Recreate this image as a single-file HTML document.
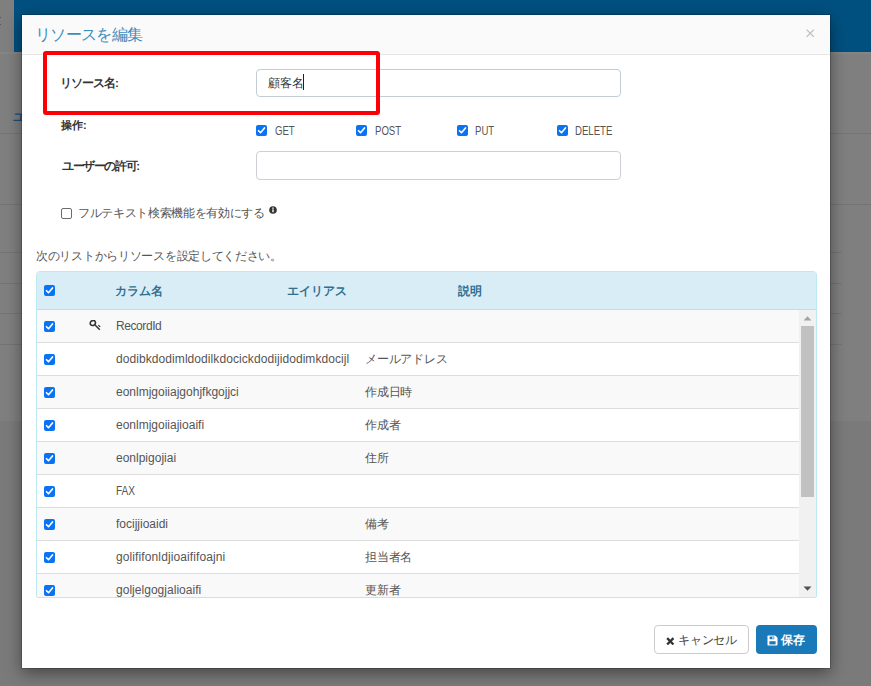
<!DOCTYPE html>
<html lang="ja">
<head>
<meta charset="utf-8">
<title>リソースを編集</title>
<style>
*{box-sizing:border-box;margin:0;padding:0}
html,body{width:871px;height:686px;overflow:hidden}
body{position:relative;background:#7f7f7f;font-family:"Liberation Sans",sans-serif;font-size:12px;color:#444}
.abs{position:absolute}
/* darkened page behind the modal */
.topbar{left:14px;top:0;width:857px;height:52px;background:#00507f}
.pgline{left:0;width:871px;height:1px;background:#747474}
.pgfoot{left:0;top:421px;width:871px;height:265px;background:#7a7a7a}
.pglink{left:12.5px;top:109.5px;font-size:12px;font-weight:bold;line-height:14px;color:#1c4f78;white-space:nowrap}
/* modal */
.modal{left:22px;top:15px;width:808px;height:653px;background:#fff;box-shadow:0 5px 15px rgba(0,0,0,.44),0 0 0 1px rgba(0,0,0,.18)}
.mhead{left:0;top:0;width:808px;height:40px;background:#fafafa;border-bottom:1px solid #e5e5e5}
.title{left:13px;top:10px;font-size:16px;line-height:20px;letter-spacing:-0.7px;color:#3c8dbc;white-space:nowrap}
.close{left:784px;top:14px;width:8.5px;height:8.5px}
.lbl{font-weight:bold;font-size:12px;line-height:14px;color:#333;white-space:nowrap}
.txt{font-size:12px;line-height:14px;color:#555;white-space:nowrap}
.inp{height:28px;border:1px solid #ccd0d4;border-radius:4px;background:#fff}
.cb{width:11px;height:11px;border-radius:2px;background:#0a73f4}
.cb svg{display:block;width:11px;height:11px}
.cbo{width:11px;height:11px;border-radius:2px;border:1px solid #6b6b6b;background:#fff}
.redbox{left:21px;top:36px;width:337px;height:64px;border:4px solid #fb0007;border-radius:3px}
/* table panel */
.panel{left:14px;top:256px;width:781px;height:327px;border:1px solid #bce8f1;border-radius:4px 4px 2px 2px;background:#fff;overflow:hidden}
.thead{left:0;top:0;width:779px;height:38px;background:#d9edf7;border-bottom:1px solid #bcdfeb}
.th{top:12px;font-weight:bold;font-size:12px;line-height:14px;color:#31708f;white-space:nowrap}
.row{left:0;width:762px;height:33px;border-bottom:1px solid #ddd;background:#fff}
.row.odd{background:#f9f9f9}
.row .cb{position:absolute;left:7px;top:11px}
.row .c1{position:absolute;left:79px;top:9px}
.row .c2{position:absolute;left:328px;top:9px;letter-spacing:-0.25px}
.sbar{left:762px;top:38px;width:17px;height:288px;background:#f1f1f1}
.thumb{left:2px;top:16px;width:13px;height:171px;background:#c1c1c1}
.btn{height:29px;border-radius:4px;font-size:12px;line-height:14px;white-space:nowrap}
.btn-default{left:632px;top:610px;width:95px;background:#fff;border:1px solid #ccc;color:#444}
.btn-primary{left:734px;top:610px;width:61px;background:#1a7ab9;color:#fff;font-weight:bold}
</style>
</head>
<body>
<!-- page behind overlay -->
<div class="abs pgfoot"></div>
<div class="abs topbar"></div>
<div class="abs" style="left:0;top:17px;width:1px;height:1px;background:#555"></div>
<div class="abs" style="left:0;top:24px;width:1px;height:1px;background:#555"></div>
<div class="abs pgline" style="top:52px;background:#858585;height:2px"></div>
<div class="abs pglink">ユーザー</div>
<div class="abs pgline" style="top:133px"></div>
<div class="abs pgline" style="top:204px"></div>
<div class="abs pgline" style="top:252px;width:842px"></div>
<div class="abs pgline" style="top:283px;width:842px"></div>
<div class="abs pgline" style="top:313px;width:842px"></div>
<div class="abs pgline" style="top:344px;width:842px"></div>

<!-- modal dialog -->
<div class="abs modal">
  <div class="abs mhead">
    <div class="abs title" id="t_title">リソースを編集</div>
    <svg class="abs close" viewBox="0 0 9 9"><path d="M0.7 0.7 L8.3 8.3 M8.3 0.7 L0.7 8.3" stroke="#bcbcbc" stroke-width="1.3" fill="none"/></svg>
  </div>

  <div class="abs lbl" id="t_l1" style="left:38px;top:61px;font-size:11.5px;letter-spacing:-1px">リソース名:</div>
  <div class="abs inp" style="left:234px;top:54px;width:365px;border-color:#c3ccd4"></div>
  <div class="abs txt" id="t_v1" style="left:246px;top:61px;color:#333">顧客名</div>
  <div class="abs" style="left:281px;top:59px;width:1px;height:16px;background:#222"></div>

  <div class="abs lbl" id="t_l2" style="left:39px;top:103px;font-size:11px">操作:</div>
  <div class="abs cb" style="left:234px;top:110px"><svg viewBox="0 0 11 11"><path d="M2.5 5.7 L4.5 7.7 L8.5 2.9" stroke="#fff" stroke-width="1.6" fill="none" stroke-linecap="round" stroke-linejoin="round"/></svg></div>
  <div class="abs txt" id="t_get" style="left:253px;top:109px;transform:scaleX(.8);transform-origin:0 0">GET</div>
  <div class="abs cb" style="left:334px;top:110px"><svg viewBox="0 0 11 11"><path d="M2.5 5.7 L4.5 7.7 L8.5 2.9" stroke="#fff" stroke-width="1.6" fill="none" stroke-linecap="round" stroke-linejoin="round"/></svg></div>
  <div class="abs txt" id="t_post" style="left:353px;top:109px;transform:scaleX(.8);transform-origin:0 0">POST</div>
  <div class="abs cb" style="left:435px;top:110px"><svg viewBox="0 0 11 11"><path d="M2.5 5.7 L4.5 7.7 L8.5 2.9" stroke="#fff" stroke-width="1.6" fill="none" stroke-linecap="round" stroke-linejoin="round"/></svg></div>
  <div class="abs txt" id="t_put" style="left:453px;top:109px;transform:scaleX(.8);transform-origin:0 0">PUT</div>
  <div class="abs cb" style="left:535px;top:110px"><svg viewBox="0 0 11 11"><path d="M2.5 5.7 L4.5 7.7 L8.5 2.9" stroke="#fff" stroke-width="1.6" fill="none" stroke-linecap="round" stroke-linejoin="round"/></svg></div>
  <div class="abs txt" id="t_del" style="left:553px;top:109px;transform:scaleX(.8);transform-origin:0 0">DELETE</div>

  <div class="abs lbl" id="t_l3" style="left:40px;top:144px;font-size:11.5px;letter-spacing:-1.4px">ユーザーの許可:</div>
  <div class="abs inp" style="left:234px;top:136px;width:365px;height:29px"></div>

  <div class="abs cbo" style="left:39px;top:193px"></div>
  <div class="abs txt" id="t_ft" style="left:56px;top:191px;letter-spacing:-0.33px">フルテキスト検索機能を有効にする</div>
  <svg class="abs" style="left:247px;top:191px;width:8px;height:8px" viewBox="0 0 8 8"><circle cx="4" cy="4" r="3.8" fill="#333"/><rect x="3.3" y="3.4" width="1.4" height="2.8" fill="#fff"/><rect x="3.3" y="1.5" width="1.4" height="1.3" fill="#fff"/></svg>

  <div class="abs txt" id="t_hint" style="left:14px;top:234px;letter-spacing:-0.29px">次のリストからリソースを設定してください。</div>

  <div class="abs redbox"></div>

  <div class="abs panel">
    <div class="abs thead">
      <div class="abs cb" style="left:7px;top:13px"><svg viewBox="0 0 11 11"><path d="M2.5 5.7 L4.5 7.7 L8.5 2.9" stroke="#fff" stroke-width="1.6" fill="none" stroke-linecap="round" stroke-linejoin="round"/></svg></div>
      <div class="abs th" id="t_h1" style="left:78px">カラム名</div>
      <div class="abs th" id="t_h2" style="left:250px">エイリアス</div>
      <div class="abs th" id="t_h3" style="left:421px">説明</div>
    </div>
    <div class="abs row odd" style="top:38px"><div class="cb"><svg viewBox="0 0 11 11"><path d="M2.5 5.7 L4.5 7.7 L8.5 2.9" stroke="#fff" stroke-width="1.6" fill="none" stroke-linecap="round" stroke-linejoin="round"/></svg></div>
      <svg class="abs" style="left:52px;top:10px;width:13px;height:11px" viewBox="0 0 13 11"><ellipse cx="3.85" cy="3" rx="2.75" ry="2.35" transform="rotate(-40 3.85 3)" stroke="#333" stroke-width="1.65" fill="none"/><path d="M5.8 4.8 L10.8 9.7" stroke="#333" stroke-width="1.5" fill="none"/><path d="M9.3 5.3 L11.3 6.8" stroke="#333" stroke-width="1.1" fill="none"/></svg>
      <div class="txt c1" id="t_r1" style="letter-spacing:-0.42px">RecordId</div></div>
    <div class="abs row" style="top:71px"><div class="cb"><svg viewBox="0 0 11 11"><path d="M2.5 5.7 L4.5 7.7 L8.5 2.9" stroke="#fff" stroke-width="1.6" fill="none" stroke-linecap="round" stroke-linejoin="round"/></svg></div>
      <div class="txt c1" id="t_r2" style="letter-spacing:0.076px">dodibkdodimldodilkdocickdodijidodimkdocijl</div><div class="txt c2" id="t_d2">メールアドレス</div></div>
    <div class="abs row odd" style="top:104px"><div class="cb"><svg viewBox="0 0 11 11"><path d="M2.5 5.7 L4.5 7.7 L8.5 2.9" stroke="#fff" stroke-width="1.6" fill="none" stroke-linecap="round" stroke-linejoin="round"/></svg></div>
      <div class="txt c1" id="t_r3">eonlmjgoiiajgohjfkgojjci</div><div class="txt c2" id="t_d3">作成日時</div></div>
    <div class="abs row" style="top:137px"><div class="cb"><svg viewBox="0 0 11 11"><path d="M2.5 5.7 L4.5 7.7 L8.5 2.9" stroke="#fff" stroke-width="1.6" fill="none" stroke-linecap="round" stroke-linejoin="round"/></svg></div>
      <div class="txt c1" id="t_r4">eonlmjgoiiajioaifi</div><div class="txt c2" id="t_d4">作成者</div></div>
    <div class="abs row odd" style="top:170px"><div class="cb"><svg viewBox="0 0 11 11"><path d="M2.5 5.7 L4.5 7.7 L8.5 2.9" stroke="#fff" stroke-width="1.6" fill="none" stroke-linecap="round" stroke-linejoin="round"/></svg></div>
      <div class="txt c1" id="t_r5">eonlpigojiai</div><div class="txt c2" id="t_d5">住所</div></div>
    <div class="abs row" style="top:203px"><div class="cb"><svg viewBox="0 0 11 11"><path d="M2.5 5.7 L4.5 7.7 L8.5 2.9" stroke="#fff" stroke-width="1.6" fill="none" stroke-linecap="round" stroke-linejoin="round"/></svg></div>
      <div class="txt c1" id="t_r6" style="transform:scaleX(.84);transform-origin:0 0">FAX</div></div>
    <div class="abs row odd" style="top:236px"><div class="cb"><svg viewBox="0 0 11 11"><path d="M2.5 5.7 L4.5 7.7 L8.5 2.9" stroke="#fff" stroke-width="1.6" fill="none" stroke-linecap="round" stroke-linejoin="round"/></svg></div>
      <div class="txt c1" id="t_r7">focijjioaidi</div><div class="txt c2" id="t_d7">備考</div></div>
    <div class="abs row" style="top:269px"><div class="cb"><svg viewBox="0 0 11 11"><path d="M2.5 5.7 L4.5 7.7 L8.5 2.9" stroke="#fff" stroke-width="1.6" fill="none" stroke-linecap="round" stroke-linejoin="round"/></svg></div>
      <div class="txt c1" id="t_r8" style="letter-spacing:0.11px">golififonldjioaififoajni</div><div class="txt c2" id="t_d8">担当者名</div></div>
    <div class="abs row odd" style="top:302px"><div class="cb"><svg viewBox="0 0 11 11"><path d="M2.5 5.7 L4.5 7.7 L8.5 2.9" stroke="#fff" stroke-width="1.6" fill="none" stroke-linecap="round" stroke-linejoin="round"/></svg></div>
      <div class="txt c1" id="t_r9" style="letter-spacing:0.03px">goljelgogjalioaifi</div><div class="txt c2" id="t_d9">更新者</div></div>
    <div class="abs sbar">
      <svg class="abs" style="left:4px;top:5.5px;width:9px;height:5px" viewBox="0 0 9 5"><path d="M0.5 4.5 L4.5 0.3 L8.5 4.5 Z" fill="#a3a3a3"/></svg>
      <div class="abs thumb"></div>
      <svg class="abs" style="left:4px;top:276px;width:9px;height:5px" viewBox="0 0 9 5"><path d="M0.5 0.5 L4.5 4.7 L8.5 0.5 Z" fill="#505050"/></svg>
    </div>
  </div>

  <div class="abs btn btn-default">
    <svg class="abs" style="left:11.3px;top:10.6px;width:8.6px;height:8.6px" viewBox="0 0 9 9"><path d="M1.2 1.2 L7.8 7.8 M7.8 1.2 L1.2 7.8" stroke="#333" stroke-width="2.4" fill="none"/></svg>
    <div class="abs" id="t_cancel" style="left:23px;top:7px;letter-spacing:-0.25px">キャンセル</div>
  </div>
  <div class="abs btn btn-primary">
    <svg class="abs" style="left:11px;top:10px;width:11px;height:11px" viewBox="0 0 11 11"><path d="M0.5 1.2 Q0.5 0.5 1.2 0.5 H8.2 L10.5 2.8 V9.8 Q10.5 10.5 9.8 10.5 H1.2 Q0.5 10.5 0.5 9.8 Z" fill="#fff"/><rect x="2.6" y="1.6" width="4.6" height="2.6" fill="#1a7ab9"/><rect x="5.4" y="2" width="1.1" height="1.8" fill="#fff"/><rect x="2.4" y="6.2" width="6.2" height="3.2" fill="#1a7ab9"/></svg>
    <div class="abs" id="t_save" style="left:25px;top:8px">保存</div>
  </div>
</div>
</body>
</html>
